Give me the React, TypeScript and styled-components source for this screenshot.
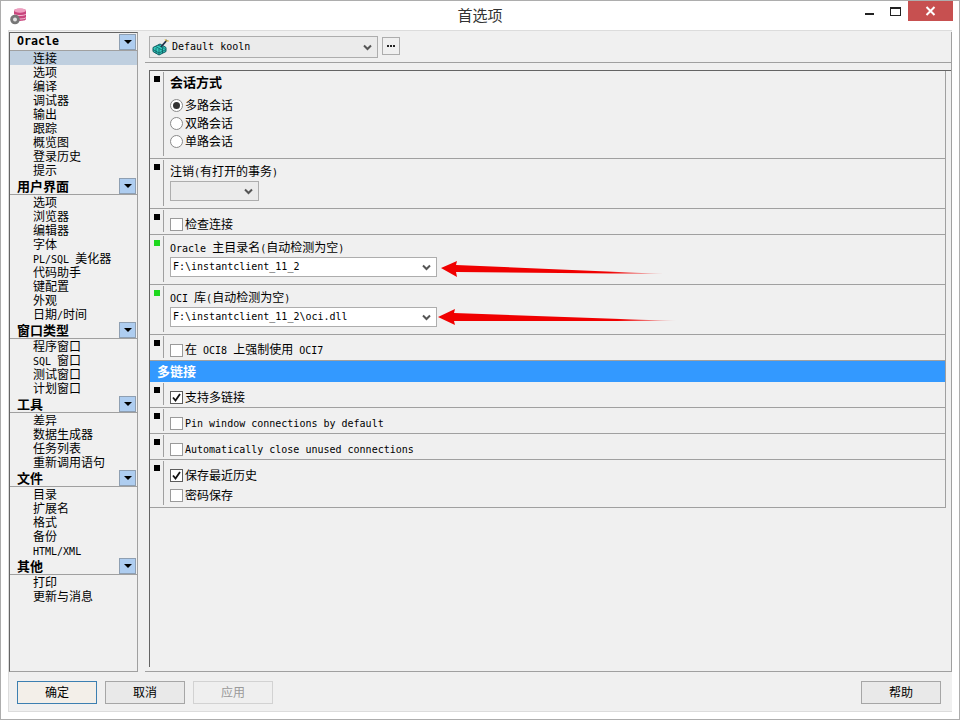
import React from 'react';
import styled, { createGlobalStyle } from 'styled-components';

const GlobalStyle = createGlobalStyle`
  html, body {
    margin: 0;
    padding: 0;
    background: #fff;
  }
  * {
    box-sizing: border-box;
  }
`;

const Window = styled.div`
  position: relative;
  width: 960px;
  height: 720px;
  display: flex;
  flex-direction: column;
  padding: 0 7px 7px;
  background: #fff;
  border: 1px solid #adadad;
  color: #000;
  font-family: "Noto Sans CJK SC", "Liberation Sans", sans-serif;
  font-size: 12px;
  overflow: hidden;
`;

const TitleBar = styled.div`
  height: 29px;
  flex: none;
  display: grid;
  grid-template-columns: 1fr auto 1fr;
  align-items: start;
`;

const AppIcon = styled.svg`
  width: 18px;
  height: 18px;
  margin: 6px 0 0 1px;
`;

const Title = styled.div`
  font-size: 15px;
  line-height: 28px;
  color: #333;
`;

const Controls = styled.div`
  justify-self: end;
  display: flex;
  margin-right: -1px;
`;

const ControlButton = styled.div<{ $close?: boolean }>`
  width: ${p => (p.$close ? '45px' : '26px')};
  height: 20px;
  display: flex;
  align-items: center;
  justify-content: center;
  background: ${p => (p.$close ? '#c75050' : 'transparent')};
`;

const Dialog = styled.div`
  flex: 1;
  min-height: 0;
  display: flex;
  flex-direction: column;
  background: #f0f0f0;
  border: 1px solid #dcdcdc;
  border-right: none;
`;

const Main = styled.div`
  flex: 1;
  min-height: 0;
  display: flex;
  gap: 7px;
  padding-top: 1px;
`;

const Sidebar = styled.div`
  width: 129px;
  flex: none;
  border: 1px solid #a0a0a0;
  border-top-color: #646464;
  border-left-color: #646464;
`;

const GroupHeader = styled.div`
  position: relative;
  height: 18px;
  padding-left: 7px;
  display: flex;
  align-items: center;
  border-bottom: 1px solid #a0a0a0;
  font-size: 13px;
  font-weight: 700;
  line-height: 17px;
`;

const GroupLatin = styled.span`
  font-family: "DejaVu Sans Mono", monospace;
  font-size: 11.6px;
  font-weight: 700;
`;

const Collapse = styled.div`
  position: absolute;
  right: 1px;
  top: 1px;
  width: 17px;
  height: 16px;
  background: #aecdf0;
  border: 1px solid #8e9fb2;
  display: flex;
  align-items: center;
  justify-content: center;

  &::after {
    content: "";
    border-left: 4px solid transparent;
    border-right: 4px solid transparent;
    border-top: 4px solid #000;
  }
`;

const NavItem = styled.div<{ $active?: boolean }>`
  height: 14px;
  line-height: 14px;
  padding-left: 23px;
  white-space: pre;
  background: ${p => (p.$active ? '#bfcfdf' : 'transparent')};
`;

const Latin = styled.span`
  font-family: "DejaVu Sans Mono", monospace;
  font-size: 10px;
`;

const RightPanel = styled.div`
  flex: 1;
  min-width: 0;
  display: flex;
  flex-direction: column;
  border-right: 1px solid #a0a0a0;
  border-bottom: 1px solid #a0a0a0;
  padding-bottom: 4px;
`;

const Toolbar = styled.div`
  height: 31px;
  flex: none;
  display: flex;
  gap: 4px;
  align-items: flex-start;
  padding: 4px 0 0 4px;
  border-bottom: 1px solid #a0a0a0;
`;

const Combo = styled.div<{ $width: number; $height?: number; $white?: boolean }>`
  width: ${p => p.$width}px;
  height: ${p => p.$height ?? 22}px;
  display: flex;
  align-items: center;
  padding: 0 5px 0 2px;
  gap: 2px;
  background: ${p => (p.$white ? '#fff' : '#ebebeb')};
  border: 1px solid #adadad;
  white-space: pre;
`;

const ComboText = styled.div`
  flex: 1;
  min-width: 0;
  height: 14px;
  line-height: 13px;
  font-family: "DejaVu Sans Mono", monospace;
  font-size: 10px;
`;

const Chevron = styled.svg`
  width: 9px;
  height: 7px;
  flex: none;
`;

const DotsButton = styled.div`
  width: 18px;
  height: 18px;
  margin-top: 1px;
  display: flex;
  align-items: center;
  justify-content: center;
  gap: 1px;
  background: #f0f0f0;
  border: 1px solid #adadad;
`;

const Dot = styled.span`
  width: 2px;
  height: 2px;
  background: #222;
`;

const KoolnIcon = styled.svg`
  width: 18px;
  height: 18px;
  flex: none;
`;

const Pane = styled.div`
  flex: 1;
  min-height: 0;
  margin: 7px 0 0 4px;
  border-top: 1px solid #646464;
  border-left: 1px solid #646464;
`;

const List = styled.div`
  width: 796px;
  border-right: 1px solid #a0a0a0;
`;

const Row = styled.div<{ $height: number }>`
  height: ${p => p.$height}px;
  display: flex;
  border-bottom: 1px solid #a0a0a0;
`;

const MarkerCell = styled.div`
  width: 13px;
  flex: none;
  padding: 5px 0 0 4px;
`;

const Marker = styled.div<{ $on?: boolean }>`
  width: 6px;
  height: 6px;
  background: ${p => (p.$on ? '#1fd81f' : '#000')};
`;

const RowBody = styled.div<{ $pad?: number; $gap?: number }>`
  flex: 1;
  display: flex;
  flex-direction: column;
  align-items: flex-start;
  gap: ${p => p.$gap ?? 3}px;
  margin: 1px 0 2px;
  padding: ${p => p.$pad ?? 4}px 0 0 6px;
  border-left: 1px solid #a0a0a0;
`;

const Label = styled.div`
  height: 14px;
  line-height: 14px;
  white-space: pre;
`;

const SectionTitle = styled(Label)`
  font-size: 13px;
  font-weight: 700;
`;

const RadioGroup = styled.div`
  display: flex;
  flex-direction: column;
  margin-top: 4px;
`;

const Option = styled.div<{ $height?: number }>`
  height: ${p => p.$height ?? 14}px;
  display: flex;
  align-items: center;
  gap: 2px;
  line-height: 14px;
  white-space: pre;
`;

const RadioMark = styled.span<{ $on?: boolean }>`
  width: 13px;
  height: 13px;
  border-radius: 50%;
  border: 1px solid #8a8a8a;
  background: #fff;
  display: flex;
  align-items: center;
  justify-content: center;

  &::after {
    content: "";
    width: 7px;
    height: 7px;
    border-radius: 50%;
    background: ${p => (p.$on ? '#333' : 'transparent')};
  }
`;

const CheckMark = styled.span<{ $on?: boolean }>`
  width: 13px;
  height: 13px;
  flex: none;
  background: #fff;
  border: 1px solid ${p => (p.$on ? '#5c5c5c' : '#9a9a9a')};
  display: flex;
  align-items: center;
  justify-content: center;
`;

const SectionBar = styled.div`
  height: 21px;
  line-height: 20px;
  padding-left: 7px;
  background: #3399ff;
  color: #fff;
  font-size: 13px;
  font-weight: 700;
`;

const Footer = styled.div`
  height: 39px;
  flex: none;
  display: flex;
  gap: 8px;
  padding: 9px 11px 0 8px;
`;

const Button = styled.div<{ $primary?: boolean; $disabled?: boolean; $right?: boolean }>`
  width: 80px;
  height: 23px;
  line-height: 20px;
  text-align: center;
  margin-left: ${p => (p.$right ? 'auto' : '0')};
  color: ${p => (p.$disabled ? '#9a9a9a' : '#000')};
  background: ${p => (p.$primary ? '#f3efe9' : p.$disabled ? '#efefef' : '#e9e9e9')};
  border: 1px solid ${p => (p.$primary ? '#3c7fb1' : p.$disabled ? '#d2d2d2' : '#a6a6a6')};
`;

const ArrowLayer = styled.svg`
  position: absolute;
  left: 429px;
  top: 249px;
  width: 260px;
  height: 85px;
  pointer-events: none;
`;

// latin runs are 10px mono in the original, cjk runs 12px
const Mixed = ({ text }: { text: string }) => (
  <>
    {text.split(/([\x00-\x7f]+)/).map((part, i) =>
      i % 2 === 1 ? <Latin key={i}>{part}</Latin> : part
    )}
  </>
);

const groups = [
  { title: 'Oracle', items: ['连接', '选项', '编译', '调试器', '输出', '跟踪', '概览图', '登录历史', '提示'] },
  { title: '用户界面', items: ['选项', '浏览器', '编辑器', '字体', 'PL/SQL 美化器', '代码助手', '键配置', '外观', '日期/时间'] },
  { title: '窗口类型', items: ['程序窗口', 'SQL 窗口', '测试窗口', '计划窗口'] },
  { title: '工具', items: ['差异', '数据生成器', '任务列表', '重新调用语句'] },
  { title: '文件', items: ['目录', '扩展名', '格式', '备份', 'HTML/XML'] },
  { title: '其他', items: ['打印', '更新与消息'] },
];

const ChevronDown = () => (
  <Chevron viewBox="0 0 9 7">
    <polyline points="1,1.5 4.5,5 8,1.5" fill="none" stroke="#555" strokeWidth="2" />
  </Chevron>
);

const Check = ({ on, children }: { on?: boolean; children: string }) => (
  <Option>
    <CheckMark $on={on}>
      {on && (
        <svg width="9" height="9" viewBox="0 0 9 9">
          <polyline points="1,4.5 3.5,7.5 8,1" fill="none" stroke="#111" strokeWidth="1.8" />
        </svg>
      )}
    </CheckMark>
    <span><Mixed text={children} /></span>
  </Option>
);

const Radio = ({ on, children }: { on?: boolean; children: string }) => (
  <Option $height={18}>
    <RadioMark $on={on} />
    <span>{children}</span>
  </Option>
);

const App = () => {
  return (
    <>
      <GlobalStyle />
      <Window>
        <TitleBar>
          <AppIcon viewBox="0 0 18 18">
            <path d="M5 3.5 C5 1 17 1 17 3.5 V12 C17 14.5 5 14.5 5 12 Z" fill="#c8447c" />
            <ellipse cx="11" cy="3.5" rx="6" ry="2.2" fill="#ee9fc0" />
            <path d="M5 7 C6 9 16 9 17 7" fill="none" stroke="#f3bcd2" />
            <path d="M5 10.5 C6 12.5 16 12.5 17 10.5" fill="none" stroke="#f3bcd2" />
            <circle cx="6" cy="12.5" r="4.8" fill="#777" />
            <circle cx="6" cy="12.5" r="2" fill="#e4e4e4" />
          </AppIcon>
          <Title>首选项</Title>
          <Controls>
            <ControlButton>
              <svg width="9" height="9" viewBox="0 0 9 9">
                <rect x="0" y="6" width="9" height="2" fill="#222" />
              </svg>
            </ControlButton>
            <ControlButton>
              <svg width="11" height="9" viewBox="0 0 11 9">
                <rect x="0.5" y="0.5" width="10" height="8" fill="none" stroke="#222" />
                <rect x="0" y="0" width="11" height="2" fill="#222" />
              </svg>
            </ControlButton>
            <ControlButton $close>
              <svg width="11" height="10" viewBox="0 0 11 10">
                <path d="M1.5 1 L9.5 9 M9.5 1 L1.5 9" stroke="#fff" strokeWidth="2" />
              </svg>
            </ControlButton>
          </Controls>
        </TitleBar>

        <Dialog>
          <Main>
            <Sidebar>
              {groups.map(group => (
                <div key={group.title}>
                  <GroupHeader>
                    {group.title === 'Oracle' ? <GroupLatin>{group.title}</GroupLatin> : group.title}
                    <Collapse />
                  </GroupHeader>
                  {group.items.map((item, i) => (
                    <NavItem key={item} $active={group.title === 'Oracle' && i === 0}>
                      <Mixed text={item} />
                    </NavItem>
                  ))}
                </div>
              ))}
            </Sidebar>

            <RightPanel>
              <Toolbar>
                <Combo $width={229}>
                  <KoolnIcon viewBox="0 0 18 18">
                    <path d="M1 9.5 L8 6 L14 9.5 L14 13.5 L7 17 L1 13.5 Z" fill="#35cdbf" stroke="#0d5a60" />
                    <path d="M3.5 8.5 L10 12 M6 7 L12.5 10.5 M1 11.5 L7 15 L14 11.5 M4 10 V15.5 M7 11 V17 M10.5 10 V15" fill="none" stroke="#0d5a60" strokeWidth="0.8" />
                    <path d="M9 9 L15 2" stroke="#20304a" strokeWidth="1.8" />
                    <path d="M13 1 L14 3 L17 3" fill="none" stroke="#e6c04a" />
                  </KoolnIcon>
                  <ComboText>Default kooln</ComboText>
                  <ChevronDown />
                </Combo>
                <DotsButton>
                  <Dot />
                  <Dot />
                  <Dot />
                </DotsButton>
              </Toolbar>

              <Pane>
                <List>
                  <Row $height={88}>
                    <MarkerCell><Marker /></MarkerCell>
                    <RowBody $pad={3}>
                      <SectionTitle>会话方式</SectionTitle>
                      <RadioGroup>
                        <Radio on>多路会话</Radio>
                        <Radio>双路会话</Radio>
                        <Radio>单路会话</Radio>
                      </RadioGroup>
                    </RowBody>
                  </Row>
                  <Row $height={50}>
                    <MarkerCell><Marker /></MarkerCell>
                    <RowBody>
                      <Label><Mixed text="注销(有打开的事务)" /></Label>
                      <Combo $width={89} $height={20}>
                        <ComboText />
                        <ChevronDown />
                      </Combo>
                    </RowBody>
                  </Row>
                  <Row $height={26}>
                    <MarkerCell><Marker /></MarkerCell>
                    <RowBody $pad={7}>
                      <Check>检查连接</Check>
                    </RowBody>
                  </Row>
                  <Row $height={50}>
                    <MarkerCell><Marker $on /></MarkerCell>
                    <RowBody>
                      <Label><Mixed text="Oracle 主目录名(自动检测为空)" /></Label>
                      <Combo $width={267} $height={20} $white>
                        <ComboText>F:\instantclient_11_2</ComboText>
                        <ChevronDown />
                      </Combo>
                    </RowBody>
                  </Row>
                  <Row $height={50}>
                    <MarkerCell><Marker $on /></MarkerCell>
                    <RowBody>
                      <Label><Mixed text="OCI 库(自动检测为空)" /></Label>
                      <Combo $width={267} $height={20} $white>
                        <ComboText>F:\instantclient_11_2\oci.dll</ComboText>
                        <ChevronDown />
                      </Combo>
                    </RowBody>
                  </Row>
                  <Row $height={26}>
                    <MarkerCell><Marker /></MarkerCell>
                    <RowBody $pad={7}>
                      <Check>在 OCI8 上强制使用 OCI7</Check>
                    </RowBody>
                  </Row>
                  <SectionBar>多链接</SectionBar>
                  <Row $height={26}>
                    <MarkerCell><Marker /></MarkerCell>
                    <RowBody $pad={7}>
                      <Check on>支持多链接</Check>
                    </RowBody>
                  </Row>
                  <Row $height={26}>
                    <MarkerCell><Marker /></MarkerCell>
                    <RowBody $pad={7}>
                      <Check>Pin window connections by default</Check>
                    </RowBody>
                  </Row>
                  <Row $height={26}>
                    <MarkerCell><Marker /></MarkerCell>
                    <RowBody $pad={7}>
                      <Check>Automatically close unused connections</Check>
                    </RowBody>
                  </Row>
                  <Row $height={48}>
                    <MarkerCell><Marker /></MarkerCell>
                    <RowBody $pad={7} $gap={6}>
                      <Check on>保存最近历史</Check>
                      <Check>密码保存</Check>
                    </RowBody>
                  </Row>
                </List>
              </Pane>
            </RightPanel>
          </Main>

          <Footer>
            <Button $primary>确定</Button>
            <Button>取消</Button>
            <Button $disabled>应用</Button>
            <Button $right>帮助</Button>
          </Footer>
        </Dialog>

        <ArrowLayer viewBox="430 250 260 85">
          <defs>
            <linearGradient id="fade" x1="0" x2="1" y1="0" y2="0">
              <stop offset="0" stopColor="#f00000" />
              <stop offset="0.75" stopColor="#f00000" />
              <stop offset="1" stopColor="#f00000" stopOpacity="0.1" />
            </linearGradient>
          </defs>
          <polygon points="441,268 457,261 456,265 665,274 456,272 457,277" fill="url(#fade)" />
          <polygon points="438,317 455,309 454,313 677,321 454,321 455,325" fill="url(#fade)" />
        </ArrowLayer>
      </Window>
    </>
  );
};

export default App;
